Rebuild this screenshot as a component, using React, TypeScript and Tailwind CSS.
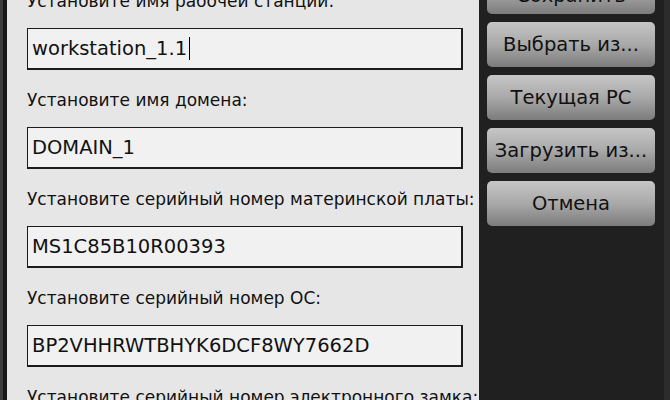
import React from "react";

const fields = [
  { label: "Установите имя рабочей станции:", value: "workstation_1.1", cursor: true },
  { label: "Установите имя домена:", value: "DOMAIN_1" },
  { label: "Установите серийный номер материнской платы:", value: "MS1C85B10R00393" },
  { label: "Установите серийный номер ОС:", value: "BP2VHHRWTBHYK6DCF8WY7662D" },
  { label: "Установите серийный номер электронного замка:", value: "" },
];

const buttons = ["Сохранить", "Выбрать из...", "Текущая PC", "Загрузить из...", "Отмена"];

function Field({ label, value, cursor }: { label: string; value: string; cursor?: boolean }) {
  return (
    <div className="flex flex-col">
      <div className="h-6 whitespace-nowrap text-[17px] leading-6 text-[#111]">{label}</div>
      <div className="mt-[15px] mb-[18px] flex h-[42px] w-[436px] items-center border border-r-2 border-b-2 border-[#1c1c1c] bg-[#f1f1f1] pl-[4px] text-[19.5px] text-[#111]">
        <span className="whitespace-nowrap">{value}</span>
        {cursor && <span className="ml-[2px] h-[23px] w-px bg-black" />}
      </div>
    </div>
  );
}

export default function App() {
  return (
    <div
      className="flex h-[400px] w-[670px] overflow-hidden bg-[#202020]"
      style={{ fontFamily: '"DejaVu Sans", "Liberation Sans", sans-serif' }}
    >
      <div className="w-[3px] shrink-0 bg-[#3c3c3c]" />
      <div className="w-[4px] shrink-0 bg-[#181818]" />
      <div className="w-[472px] shrink-0 overflow-hidden bg-[#e6e6e6] pl-[20px]">
        <div className="mt-[-11px] flex flex-col">
          {fields.map((f) => (
            <Field key={f.label} label={f.label} value={f.value} cursor={f.cursor} />
          ))}
        </div>
      </div>
      <div className="w-[185px] shrink-0 bg-[#202020] pl-[8px] pr-[9px]">
        <div className="mt-[-31px] flex flex-col gap-2">
          {buttons.map((b, i) => (
            <div
              key={b}
              className={
                "flex h-[45px] items-center justify-center rounded-[5px] bg-gradient-to-b from-[#c6c6c6] via-[#a9a9a9] to-[#7c7c7c] text-[19.5px] text-[#111]" +
                (i === 0 ? " pt-[8px]" : "")
              }
            >
              {b}
            </div>
          ))}
        </div>
      </div>
      <div className="w-[6px] shrink-0 bg-[#2c2c2c]" />
    </div>
  );
}
